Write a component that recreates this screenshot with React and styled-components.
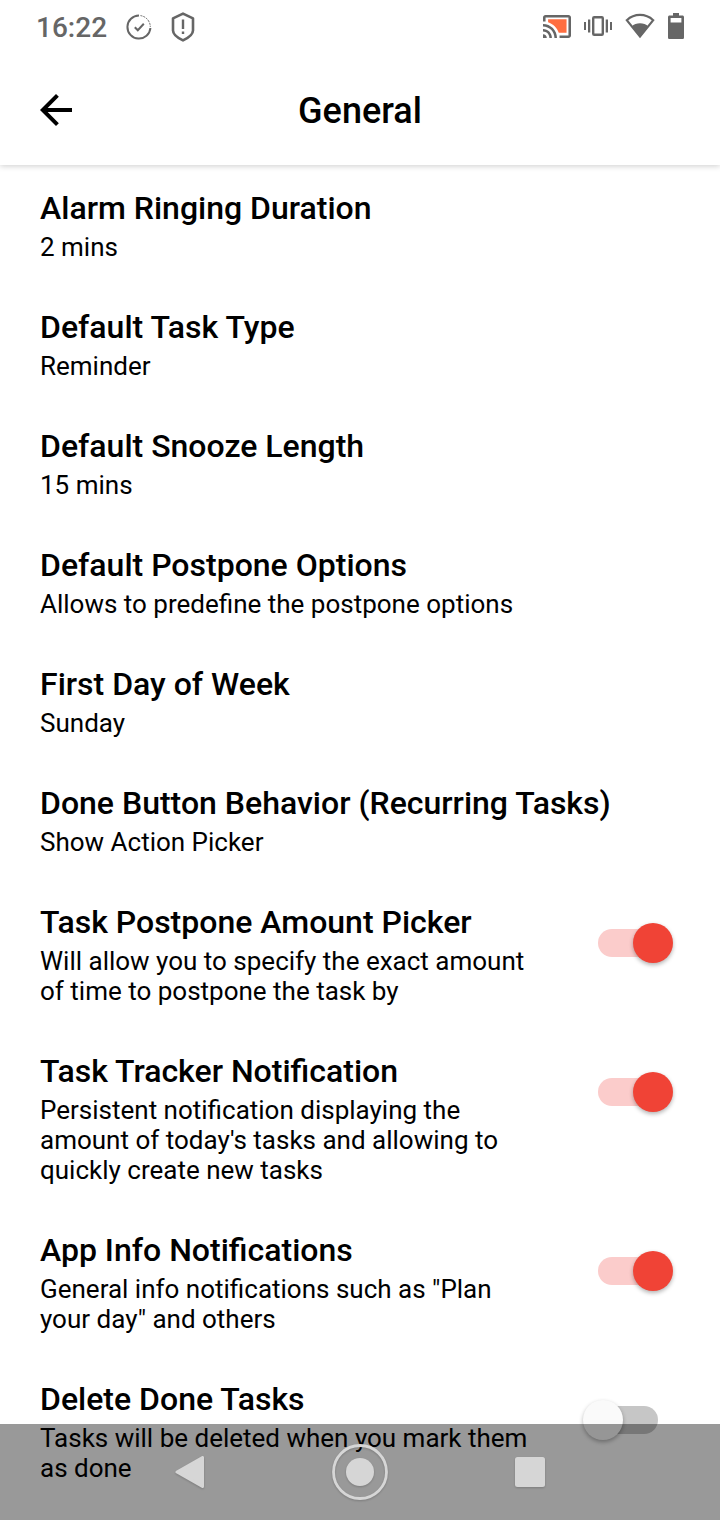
import React, { useState } from "react";
import styled, { createGlobalStyle } from "styled-components";

const options = [
  { title: "Alarm Ringing Duration", text: "2 mins" },
  { title: "Default Task Type", text: "Reminder" },
  { title: "Default Snooze Length", text: "15 mins" },
  {
    title: "Default Postpone Options",
    text: "Allows to predefine the postpone options",
  },
  { title: "First Day of Week", text: "Sunday" },
  {
    title: "Done Button Behavior (Recurring Tasks)",
    text: "Show Action Picker",
  },
];

const toggles = [
  {
    id: "postpone-picker",
    title: "Task Postpone Amount Picker",
    text: "Will allow you to specify the exact amount of time to postpone the task by",
    on: true,
  },
  {
    id: "task-tracker",
    title: "Task Tracker Notification",
    text: "Persistent notification displaying the amount of today's tasks and allowing to quickly create new tasks",
    on: true,
  },
  {
    id: "app-info",
    title: "App Info Notifications",
    text: 'General info notifications such as "Plan your day" and others',
    on: true,
  },
  {
    id: "delete-done",
    title: "Delete Done Tasks",
    text: "Tasks will be deleted when you mark them as done",
    on: false,
  },
];

const ToggleRow = ({ id, title, text, on }) => {
  const [checked, setChecked] = useState(on);
  return (
    <SwitchRow htmlFor={id}>
      <RowText>
        <RowTitle>{title}</RowTitle>
        <RowInfo>{text}</RowInfo>
      </RowText>
      <Switch
        id={id}
        type="checkbox"
        role="switch"
        checked={checked}
        onChange={(e) => setChecked(e.target.checked)}
      />
    </SwitchRow>
  );
};

const App = () => {
  return (
    <Container>
      <GlobalStyle />
      <TopArea>
        <StatusBar>
          <Clock>16:22</Clock>
          <Notices>
            <svg width="26" height="28" viewBox="0 0 26 28" fill="none" stroke="#666">
              <path d="M13 2.6A11.5 11.5 0 1 0 24.4 15" strokeWidth="2" />
              <path
                d="M14.5 2.6A11.5 11.5 0 0 1 24.3 14"
                strokeWidth="1"
                strokeDasharray="2 1"
              />
              <path d="M8.8 14.2l3 3 6-6.4" strokeWidth="2" />
            </svg>
            <svg width="24" height="30" viewBox="0 0 24 30" fill="none" stroke="#666">
              <path
                d="M12 1.6L22 6.4v12c0 4-5 7.500-10 10-5-2.500-10-6-10-10v-12z"
                strokeWidth="2.6"
                strokeLinejoin="round"
              />
              <path d="M12 7.5v9.500M12 19.5v2.400" strokeWidth="2.4" />
            </svg>
          </Notices>
          <SystemIcons>
            <svg width="28" height="23" viewBox="1 3 22 18">
              <path
                fill="#ff6e40"
                d="M19.5 6.4H5v2.2c3.96 1.28 7.09 4.41 8.37 8.4h6.13z"
              />
              <path
                fill="#666"
                d="M1 18v3h3c0-1.66-1.34-3-3-3zm0-4v2c2.76 0 5 2.24 5 5h2c0-3.87-3.13-7-7-7zm0-4v2c4.97 0 9 4.03 9 9h2c0-6.08-4.93-11-11-11zm20-7H3c-1.1 0-2 .9-2 2v3h2V5h18v14h-7v2h7c1.1 0 2-.9 2-2V5c0-1.1-.9-2-2-2z"
              />
            </svg>
            <svg width="28" height="22" viewBox="0 0 28 22" fill="#666">
              <rect
                x="9.2"
                y="2.2"
                width="9.6"
                height="17.6"
                rx="1"
                fill="none"
                stroke="#666"
                strokeWidth="2.4"
              />
              <path d="M0 7h2v8H0zM4 4.5h2.3v13H4zM21.7 4.5H24v13h-2.3zM26 7h2v8h-2z" />
            </svg>
            <svg width="30" height="26" viewBox="0 0 30 26">
              <path
                d="M1.8 7.2C9.4.2 20.6.2 28.2 7.2L15 23.6z"
                fill="none"
                stroke="#666"
                strokeWidth="2.2"
              />
              <path d="M6.6 13.4c4.4-4.2 12.4-4.2 16.8 0L15 24z" fill="#666" />
            </svg>
            <svg width="16" height="26" viewBox="0 0 16 26">
              <path
                fill="#666"
                fillRule="evenodd"
                d="M5 0h6v2.4h3.4c.9 0 1.6.7 1.6 1.6v20.4c0 .9-.7 1.6-1.6 1.6H1.6C.7 26 0 25.3 0 24.4V4c0-.9.7-1.6 1.6-1.6H5zM2.6 5v4.6h10.8V5z"
              />
            </svg>
          </SystemIcons>
        </StatusBar>

        <Header>
          <BackButton aria-label="Back">
            <svg width="32" height="32" viewBox="4 4 16 16">
              <path d="M20 11H7.83l5.59-5.59L12 4l-8 8 8 8 1.41-1.41L7.83 13H20v-2z" />
            </svg>
          </BackButton>
          <PageTitle>General</PageTitle>
        </Header>
      </TopArea>

      <main>
        {options.map((item) => (
          <OptionRow key={item.title}>
            <RowTitle>{item.title}</RowTitle>
            <RowInfo>{item.text}</RowInfo>
          </OptionRow>
        ))}
        {toggles.map((item) => (
          <ToggleRow key={item.id} {...item} />
        ))}
      </main>

      <NavBar>
        <NavKeys>
          <NavButton aria-label="Navigate back">
            <svg width="32" height="34" viewBox="0 0 32 34">
              <path
                d="M28.500 2.500v29L3 17z"
                fill="#d6d6d6"
                stroke="#d6d6d6"
                strokeWidth="3"
                strokeLinejoin="round"
              />
            </svg>
          </NavButton>
          <NavButton aria-label="Home">
            <svg width="56" height="56" viewBox="0 0 56 56">
              <circle
                cx="28"
                cy="28"
                r="26.5"
                fill="none"
                stroke="#d6d6d6"
                strokeWidth="2.8"
              />
              <circle cx="28" cy="28" r="14" fill="#d6d6d6" />
            </svg>
          </NavButton>
          <NavButton aria-label="Recent apps">
            <svg width="30" height="30" viewBox="0 0 30 30">
              <rect width="30" height="30" rx="2.5" fill="#d6d6d6" />
            </svg>
          </NavButton>
        </NavKeys>
      </NavBar>
    </Container>
  );
};

const GlobalStyle = createGlobalStyle`
  * {
    box-sizing: border-box;
  }
  body {
    margin: 0;
    background-color: #fff;
    font-family: Roboto, "Liberation Sans", sans-serif;
    color: #000;
  }
  button {
    border: none;
    padding: 0;
    background: none;
    color: inherit;
    font-family: inherit;
    cursor: pointer;
  }
  svg {
    display: block;
  }
`;

const Container = styled.div`
  min-height: 100vh;
`;

const TopArea = styled.div`
  background-color: #fff;
  box-shadow: 0 1px 6px rgba(0, 0, 0, 0.2);
`;

const StatusBar = styled.div`
  display: flex;
  align-items: center;
  height: 54px;
  padding: 0 36px;
`;

const Clock = styled.span`
  padding-top: 2px;
  font-size: 28px;
  font-weight: 500;
  line-height: 32px;
  color: #666;
`;

const Notices = styled.div`
  display: flex;
  align-items: center;
  gap: 19px;
  margin-left: 19px;
`;

const SystemIcons = styled.div`
  display: flex;
  align-items: center;
  gap: 13px;
  margin-left: auto;
  padding-bottom: 2px;
`;

const Header = styled.header`
  display: grid;
  grid-template-columns: 32px 1fr 32px;
  align-items: center;
  height: 111px;
  padding: 0 40px;
`;

const BackButton = styled.button`
  width: 32px;
  height: 32px;
`;

const PageTitle = styled.h1`
  margin: 0;
  padding-top: 2px;
  font-size: 36px;
  font-weight: 500;
  line-height: 42px;
  text-align: center;
`;

const OptionRow = styled.button`
  display: block;
  width: 100%;
  text-align: start;
  && {
    padding: 23px 40px 22px;
  }
`;

const SwitchRow = styled.label`
  display: flex;
  align-items: flex-start;
  gap: 32px;
  padding: 23px 40px 22px;
  cursor: pointer;
`;

const RowText = styled.span`
  flex: 1;
  min-width: 0;
`;

const RowTitle = styled.span`
  display: block;
  margin-bottom: 4px;
  font-size: 32px;
  font-weight: 500;
  line-height: 40px;
`;

const RowInfo = styled.span`
  display: block;
  font-size: 26px;
  font-weight: 400;
  line-height: 30px;
`;

const Switch = styled.input`
  appearance: none;
  position: relative;
  flex: none;
  width: 104px;
  height: 40px;
  margin: 21px 0 0;
  cursor: pointer;
  &::before {
    content: "";
    position: absolute;
    top: 6px;
    left: 22px;
    width: 60px;
    height: 28px;
    border-radius: 14px;
    background-color: ${(props) => (props.checked ? "#fbcccb" : "#c6c6c6")};
  }
  &::after {
    content: "";
    position: absolute;
    top: 0;
    left: ${(props) => (props.checked ? "57px" : "7px")};
    width: 40px;
    height: 40px;
    border-radius: 50%;
    background-color: ${(props) => (props.checked ? "#f04336" : "#fafafa")};
    box-shadow: 0 2px 4px rgba(0, 0, 0, 0.3);
  }
`;

const NavBar = styled.nav`
  position: fixed;
  right: 0;
  bottom: 0;
  left: 0;
  display: flex;
  justify-content: center;
  height: 96px;
  background-color: rgba(0, 0, 0, 0.4);
`;

const NavKeys = styled.div`
  display: grid;
  grid-template-columns: repeat(3, 1fr);
  width: 71%;
`;

const NavButton = styled.button`
  display: flex;
  align-items: center;
  justify-content: center;
  svg {
    filter: drop-shadow(0 1px 1px rgba(0, 0, 0, 0.2));
  }
`;

export default App;
